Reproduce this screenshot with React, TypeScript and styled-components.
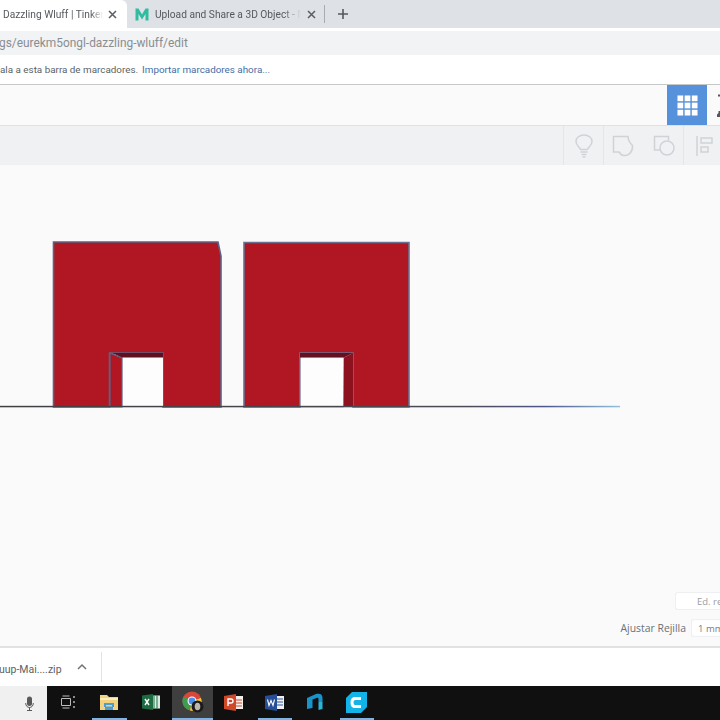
import React from "react";
import styled, { createGlobalStyle } from "styled-components";

const Global = createGlobalStyle`
  html, body { margin: 0; padding: 0; background: #fafafa; overflow: hidden; }
  #root { width: 720px; height: 720px; }
`;

const Page = styled.div`
  width: 720px;
  height: 720px;
  display: flex;
  flex-direction: column;
  overflow: hidden;
  font-family: Roboto, "Open Sans", "Liberation Sans", sans-serif;
  filter: blur(0.35px);
`;

const TabStrip = styled.div`
  height: 28px;
  flex: none;
  display: flex;
  align-items: center;
  background: #dee1e6;
`;

const ActiveTab = styled.div`
  width: 127px;
  height: 28px;
  flex: none;
  display: flex;
  align-items: center;
  padding-left: 3px;
  box-sizing: border-box;
  background: #fff;
  border-top-right-radius: 6px;
`;

const Tab = styled.div`
  width: 197px;
  height: 28px;
  flex: none;
  display: flex;
  align-items: center;
  padding-left: 8px;
  box-sizing: border-box;
`;

const TabLabel = styled.span<{ $w: number; $ml: number }>`
  width: ${(p) => p.$w}px;
  margin-left: ${(p) => p.$ml}px;
  flex: none;
  overflow: hidden;
  white-space: nowrap;
  font-size: 10.2px;
  color: #55595e;
  -webkit-mask-image: linear-gradient(to right, #000 88%, transparent 100%);
  mask-image: linear-gradient(to right, #000 88%, transparent 100%);
`;

const TabClose = styled.svg<{ $ml: number }>`
  width: 9px;
  height: 9px;
  flex: none;
  margin-left: ${(p) => p.$ml}px;
`;

const TabDivider = styled.div`
  width: 1px;
  height: 18px;
  flex: none;
  background: #a8abb0;
`;

const NewTab = styled.svg`
  width: 12px;
  height: 12px;
  flex: none;
  margin-left: 12px;
`;

const AddressArea = styled.div`
  height: 27px;
  flex: none;
  box-sizing: border-box;
  padding-top: 3px;
  background: #fff;
`;

const AddressBar = styled.div`
  height: 24px;
  display: flex;
  align-items: center;
  background: #f1f3f4;
  font-size: 11.9px;
  color: #8a8d91;
  white-space: nowrap;
`;

const AddressText = styled.span`
  margin-left: -1px;
`;

const Bookmarks = styled.div`
  height: 30px;
  flex: none;
  display: flex;
  align-items: center;
  gap: 4px;
  box-sizing: border-box;
  background: #fff;
  border-bottom: 1px solid #c6c7c9;
  font-size: 9.85px;
  color: #5c5f63;
  white-space: nowrap;
`;

const BookmarkLink = styled.span`
  color: #3f6ea6;
`;

const Toolbar = styled.div`
  height: 41px;
  flex: none;
  box-sizing: border-box;
  display: flex;
  justify-content: flex-end;
  background: #fafafa;
  border-bottom: 1px solid #dfe1e6;
`;

const GridButton = styled.div`
  width: 40px;
  height: 40px;
  display: flex;
  align-items: center;
  justify-content: center;
  background: #5692db;
`;

const UserSlot = styled.div`
  width: 13px;
  height: 40px;
  overflow: hidden;
`;

const ActionPanel = styled.div`
  height: 39px;
  flex: none;
  display: flex;
  justify-content: flex-end;
  background: #f0f1f3;
`;

const ActionCell = styled.div<{ $w: number; $divider?: boolean }>`
  width: ${(p) => p.$w}px;
  height: 39px;
  flex: none;
  box-sizing: border-box;
  display: flex;
  align-items: center;
  justify-content: center;
  border-left: ${(p) => (p.$divider ? "1px solid #e4e6e9" : "0")};
`;

const Canvas = styled.div`
  position: relative;
  flex: 1;
  min-height: 0;
  display: flex;
  flex-direction: column;
  align-items: flex-end;
  justify-content: flex-end;
  gap: 9px;
  padding-bottom: 9px;
  box-sizing: border-box;
  background: #fafafa;
  border-bottom: 2px solid #e2e2e2;
  overflow: hidden;
  font-family: "Open Sans", "Liberation Sans", sans-serif;
`;

const Scene = styled.svg`
  position: absolute;
  left: 0;
  top: 0;
  width: 720px;
  height: 481px;
`;

const EditButton = styled.div`
  position: relative;
  width: 45px;
  height: 18px;
  box-sizing: border-box;
  padding-left: 21px;
  background: #fff;
  border: 1px solid #eeeff0;
  border-right: 0;
  border-radius: 3px 0 0 3px;
  font-size: 9.5px;
  line-height: 17px;
  color: #9a9da1;
  white-space: nowrap;
  overflow: hidden;
`;

const GridRow = styled.div`
  position: relative;
  display: flex;
  align-items: center;
  gap: 5px;
`;

const GridLabel = styled.span`
  font-size: 10.4px;
  color: #6b7076;
  white-space: nowrap;
`;

const GridSelect = styled.div`
  width: 29px;
  height: 18px;
  box-sizing: border-box;
  padding-left: 6px;
  background: #fff;
  border: 1px solid #eeeff0;
  border-right: 0;
  border-radius: 3px 0 0 3px;
  font-size: 9.5px;
  line-height: 17px;
  color: #777b80;
  white-space: nowrap;
  overflow: hidden;
`;

const DownloadBar = styled.div`
  height: 38px;
  flex: none;
  display: flex;
  align-items: center;
  padding-top: 4px;
  box-sizing: border-box;
  background: #fff;
  white-space: nowrap;
`;

const FileName = styled.span`
  width: 75px;
  margin: 1px 0 0 -1px;
  flex: none;
  font-size: 10.5px;
  color: #5c5f63;
`;

const Chevron = styled.svg`
  width: 10px;
  height: 7px;
  flex: none;
  margin: -6px 0 0 3px;
`;

const BarDivider = styled.div`
  width: 1px;
  height: 30px;
  flex: none;
  margin: -4px 0 0 14px;
  background: #e3e3e3;
`;

const Taskbar = styled.div`
  height: 34px;
  flex: none;
  display: flex;
  background: #101011;
`;

const SearchStub = styled.div`
  width: 47px;
  height: 34px;
  flex: none;
  display: flex;
  align-items: center;
  justify-content: flex-end;
  padding-right: 13px;
  box-sizing: border-box;
  background: #f0f0f0;
`;

const TaskIcon = styled.div<{ $w?: number; $active?: boolean; $open?: boolean }>`
  position: relative;
  width: ${(p) => p.$w ?? 41}px;
  height: 34px;
  flex: none;
  display: flex;
  align-items: center;
  justify-content: center;
  padding-bottom: 2px;
  box-sizing: border-box;
  background: ${(p) => (p.$active ? "#3f3f40" : "transparent")};

  &::after {
    content: "";
    display: ${(p) => (p.$open ? "block" : "none")};
    position: absolute;
    bottom: 0;
    left: ${(p) => (p.$active ? 0 : 4)}px;
    right: ${(p) => (p.$active ? 0 : 3)}px;
    height: 2px;
    background: #7db4e6;
  }
`;

const Close = () => (
  <path d="M1 1 L8 8 M8 1 L1 8" stroke="#5a5d61" strokeWidth="1.5" fill="none" />
);

const StrokeIcon = styled.svg`
  fill: none;
  stroke: #cfd3d8;
  stroke-width: 1.5;
`;

export default function App() {
  return (
    <Page>
      <Global />
      <TabStrip>
        <ActiveTab>
          <TabLabel $w={100} $ml={0}>Dazzling Wluff | Tinkercad</TabLabel>
          <TabClose $ml={5} viewBox="0 0 9 9"><Close /></TabClose>
        </ActiveTab>
        <Tab>
          <svg width="14" height="13" viewBox="0 0 14 13">
            <path d="M0.5 12.5 L0.5 0.5 L3.5 0.5 L7 6.5 L10.5 0.5 L13.5 0.5 L13.5 12.5 L10.5 12.5 L10.5 6 L7 11.5 L3.5 6 L3.5 12.5 Z" fill="#2fbd9f" />
          </svg>
          <TabLabel $w={146} $ml={6}>Upload and Share a 3D Object - MyMini</TabLabel>
          <TabClose $ml={6} viewBox="0 0 9 9"><Close /></TabClose>
        </Tab>
        <TabDivider />
        <NewTab viewBox="0 0 12 12">
          <path d="M6 1 V11 M1 6 H11" stroke="#55585c" strokeWidth="1.6" />
        </NewTab>
      </TabStrip>

      <AddressArea>
        <AddressBar>
          <AddressText>gs/eurekm5ongl-dazzling-wluff/edit</AddressText>
        </AddressBar>
      </AddressArea>

      <Bookmarks>
        <span>ala a esta barra de marcadores.</span>
        <BookmarkLink>Importar marcadores ahora...</BookmarkLink>
      </Bookmarks>

      <Toolbar>
        <GridButton>
          <svg width="21" height="21" viewBox="0 0 22 22" fill="#fff">
            <rect x="0.5" y="0.5" width="6" height="6" />
            <rect x="8" y="0.5" width="6" height="6" />
            <rect x="15.5" y="0.5" width="6" height="6" />
            <rect x="0.5" y="8" width="6" height="6" />
            <rect x="8" y="8" width="6" height="6" />
            <rect x="15.5" y="8" width="6" height="6" />
            <rect x="0.5" y="15.5" width="6" height="6" />
            <rect x="8" y="15.5" width="6" height="6" />
            <rect x="15.5" y="15.5" width="6" height="6" />
          </svg>
        </GridButton>
        <UserSlot>
          <svg width="13" height="40" viewBox="0 0 13 40">
            <rect x="11" y="9.5" width="2" height="2" fill="#55585c" />
            <path d="M10 32 L10 29.5 L11.5 28 L11.5 26 L13 26 L13 32 Z" fill="#55585c" />
          </svg>
        </UserSlot>
      </Toolbar>

      <ActionPanel>
        <ActionCell $w={40} $divider>
          <StrokeIcon width="18" height="24" viewBox="0 0 18 24">
            <path d="M5.5 15.5 C4.5 12.5 1 11.5 1 7.5 C1 3.5 4.5 1 9 1 C13.5 1 17 3.5 17 7.5 C17 11.5 13.5 12.5 12.5 15.5 Z" />
            <path d="M5.5 18 H12.5 M6.5 20.5 H11.5 M7.5 23 H10.5" />
          </StrokeIcon>
        </ActionCell>
        <ActionCell $w={80} $divider>
          <StrokeIcon width="22" height="22" viewBox="0 0 22 22" style={{ marginRight: 16 }}>
            <path d="M1.5 1.5 H16 C16 5 18 8 20.5 10.5 C21 17 16.5 21 12 20.5 C9.5 20.5 8 18.5 7 17 H1.5 Z" />
          </StrokeIcon>
          <StrokeIcon width="22" height="21" viewBox="0 0 22 21" style={{ marginLeft: 3 }}>
            <path d="M7 15 H1.5 V1.5 H15.5 V5.5" />
            <circle cx="14" cy="13" r="7" />
          </StrokeIcon>
        </ActionCell>
        <ActionCell $w={37} $divider>
          <StrokeIcon width="17" height="20" viewBox="0 0 17 20" style={{ marginLeft: 5 }}>
            <path d="M1 0 V20" />
            <rect x="5" y="2" width="11" height="5" />
            <rect x="5" y="11" width="7" height="5" />
          </StrokeIcon>
        </ActionCell>
      </ActionPanel>

      <Canvas>
        <Scene viewBox="0 165 720 481">
          <defs>
            <linearGradient id="ground" x1="0" x2="620" y1="0" y2="0" gradientUnits="userSpaceOnUse">
              <stop offset="0" stopColor="#3f3f42" />
              <stop offset="0.75" stopColor="#4a4a55" />
              <stop offset="0.88" stopColor="#50568e" />
              <stop offset="1" stopColor="#8fc2dc" />
            </linearGradient>
          </defs>
          <path
            d="M53.5 242 H218 L221 256 V407 H163 V353 H109.5 V407 H53.5 Z"
            fill="#b01722" stroke="#5d6284" strokeWidth="1.6"
          />
          <rect x="122" y="357" width="41" height="50" fill="#fdfdfd" />
          <path d="M110 353 L122 358 V407 H110 Z" fill="#b01722" stroke="#5d6284" strokeWidth="1.2" />
          <path d="M112 353 H163 V357.5 H122 Z" fill="#5f1020" />
          <path
            d="M244 242.5 H409 V407 H353 V353 H300 V407 H244 Z"
            fill="#b01722" stroke="#6b7090" strokeWidth="1.6"
          />
          <rect x="300.5" y="357" width="43" height="50" fill="#fdfdfd" stroke="#8f93b0" strokeWidth="0.6" />
          <path d="M300 353 H353 L344 357.5 H300 Z" fill="#651020" />
          <path d="M344 357.5 L353 353 V407 H343.5 Z" fill="#8c1220" />
          <rect x="0" y="405.8" width="620" height="1.5" fill="url(#ground)" />
        </Scene>
        <EditButton>Ed. red</EditButton>
        <GridRow>
          <GridLabel>Ajustar Rejilla</GridLabel>
          <GridSelect>1 mm</GridSelect>
        </GridRow>
      </Canvas>

      <DownloadBar>
        <FileName>uup-Mai....zip</FileName>
        <Chevron viewBox="0 0 10 7">
          <path d="M1 6 L5 2 L9 6" stroke="#707377" strokeWidth="1.5" fill="none" />
        </Chevron>
        <BarDivider />
      </DownloadBar>

      <Taskbar>
        <SearchStub>
          <svg width="9" height="15" viewBox="0 0 9 15">
            <rect x="2" y="0.5" width="5" height="9.5" rx="2.5" fill="#58595b" />
            <path d="M0.7 7 C0.7 13 8.3 13 8.3 7 M4.5 11.5 V14 M2 14.5 H7" stroke="#58595b" strokeWidth="1" fill="none" />
          </svg>
        </SearchStub>
        <TaskIcon>
          <svg width="14" height="14" viewBox="0 0 14 14">
            <path d="M1.5 1 H8.5 M1.5 13 H8.5 M0.5 3.5 H9.5 V10.5 H0.5 Z" stroke="#bdbdbd" strokeWidth="1" fill="none" />
            <path d="M13 1 V3 M13 6 V8 M13 11 V13" stroke="#bdbdbd" strokeWidth="1.4" />
          </svg>
        </TaskIcon>
        <TaskIcon $w={42} $open>
          <svg width="18" height="16" viewBox="0 0 18 16">
            <path d="M0 1 H7 L9 3 H18 V16 H0 Z" fill="#f3d382" />
            <path d="M0 4 H18 V6 H0 Z" fill="#fbeeb9" />
            <path d="M4 9 H14 V13 H12 V11 H6 V13 H4 Z" fill="#4d9dd1" />
            <rect x="5" y="12.5" width="8" height="3.5" fill="#4d9dd1" />
          </svg>
        </TaskIcon>
        <TaskIcon $w={42}>
          <svg width="18" height="16" viewBox="0 0 18 16">
            <rect x="9" y="1.5" width="9" height="13" fill="#d9ebe0" />
            <path d="M12 1.5 V14.5 M15 1.5 V14.5" stroke="#1f7046" strokeWidth="1" />
            <path d="M0 1.5 L11 0 V16 L0 14.5 Z" fill="#1e6b42" />
            <path d="M3 5 L7 11 M7 5 L3 11" stroke="#fff" strokeWidth="1.4" />
          </svg>
        </TaskIcon>
        <TaskIcon $active $open>
          <svg width="22" height="22" viewBox="0 0 22 22">
            <circle cx="10" cy="10" r="9.5" fill="#d8483a" />
            <path d="M10 10 L1.5 5.5 A9.5 9.5 0 0 0 8 19.3 Z" fill="#3f9b4e" />
            <path d="M10 10 L8 19.5 A9.5 9.5 0 0 0 19 7 Z" fill="#f2c83a" />
            <circle cx="10" cy="10" r="4.5" fill="#fff" />
            <circle cx="10" cy="10" r="3.4" fill="#4c8ef0" />
            <circle cx="15.5" cy="15.5" r="6" fill="#1c1a1a" />
            <ellipse cx="15.5" cy="15.5" rx="2.8" ry="3.8" fill="#bdb7ae" />
          </svg>
        </TaskIcon>
        <TaskIcon>
          <svg width="19" height="17" viewBox="0 0 19 17">
            <rect x="9" y="2" width="10" height="13" fill="#f3f0ee" />
            <path d="M12 6 H18 M12 9 H18 M12 12 H18" stroke="#d0492b" strokeWidth="1" />
            <path d="M0 2 L12 0 V17 L0 15 Z" fill="#d0482a" />
            <path d="M4 12 V5 H7 A2 2 0 0 1 7 9 H4" stroke="#fff" strokeWidth="1.4" fill="none" />
          </svg>
        </TaskIcon>
        <TaskIcon $open>
          <svg width="19" height="17" viewBox="0 0 19 17">
            <rect x="9" y="2" width="10" height="13" fill="#eef0f4" />
            <path d="M12 5 H18 M12 8 H18 M12 11 H18" stroke="#2b5797" strokeWidth="1" />
            <path d="M0 2 L12 0 V17 L0 15 Z" fill="#274f97" />
            <path d="M2.5 5.5 L4 11.5 L6 6.5 L8 11.5 L9.5 5.5" stroke="#fff" strokeWidth="1.1" fill="none" />
          </svg>
        </TaskIcon>
        <TaskIcon>
          <svg width="18" height="18" viewBox="0 0 18 18">
            <path d="M0 5 L9 1 C13 0 15.5 1 15.5 5 V9 H11.5 V6 C11.5 5 10.5 4.5 9.5 5 L5.5 6.5 V15 L0 16 Z" fill="#1a93c9" />
            <path d="M11.5 9 H15.5 V16 L11.5 17 Z" fill="#2bb6d6" />
          </svg>
        </TaskIcon>
        <TaskIcon $open>
          <svg width="21" height="21" viewBox="0 0 21 21">
            <path d="M0 6 L6 0 H21 V15 L15 21 H0 Z" fill="#12b3e6" />
            <path d="M15 6.5 H9 Q6 6.5 6 10.5 Q6 14.5 9 14.5 H15" stroke="#fff" strokeWidth="3" fill="none" />
          </svg>
        </TaskIcon>
      </Taskbar>
    </Page>
  );
}
